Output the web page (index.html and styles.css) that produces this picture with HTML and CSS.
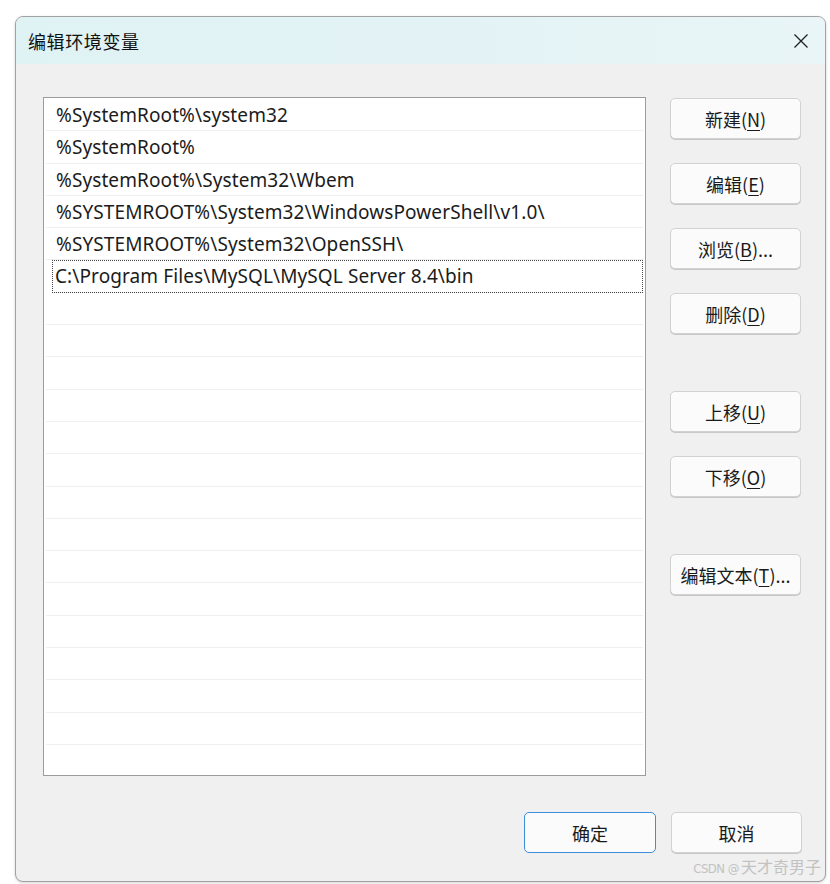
FILE: index.html
```html
<!DOCTYPE html>
<html lang="zh-CN">
<head>
<meta charset="utf-8">
<title>编辑环境变量</title>
<link rel="stylesheet" href="styles.css">
</head>
<body>
<div class="window">
  <div class="titlebar">
    <span class="title">编辑环境变量</span>
    <span class="close">
      <svg width="16" height="16" viewBox="0 0 16 16"><path d="M1.5 1.5 L14.5 14.5 M14.5 1.5 L1.5 14.5" stroke="#1f1f1f" stroke-width="1.3" fill="none"/></svg>
    </span>
  </div>
  <div class="content">
    <div class="main">
      <div class="list">
        <div class="row">%SystemRoot%\system32</div>
        <div class="row">%SystemRoot%</div>
        <div class="row">%SystemRoot%\System32\Wbem</div>
        <div class="row">%SYSTEMROOT%\System32\WindowsPowerShell\v1.0\</div>
        <div class="row">%SYSTEMROOT%\System32\OpenSSH\</div>
        <div class="row focus">C:\Program Files\MySQL\MySQL Server 8.4\bin</div>
        <div class="row"></div>
        <div class="row"></div>
        <div class="row"></div>
        <div class="row"></div>
        <div class="row"></div>
        <div class="row"></div>
        <div class="row"></div>
        <div class="row"></div>
        <div class="row"></div>
        <div class="row"></div>
        <div class="row"></div>
        <div class="row"></div>
        <div class="row"></div>
        <div class="row"></div>
        <div class="row last"></div>
      </div>
      <div class="side">
        <button class="btn">新建(<u>N</u>)</button>
        <button class="btn">编辑(<u>E</u>)</button>
        <button class="btn">浏览(<u>B</u>)...</button>
        <button class="btn">删除(<u>D</u>)</button>
        <button class="btn gap">上移(<u>U</u>)</button>
        <button class="btn">下移(<u>O</u>)</button>
        <button class="btn gap">编辑文本(<u>T</u>)...</button>
      </div>
    </div>
    <div class="footer">
      <button class="btn primary">确定</button>
      <button class="btn">取消</button>
    </div>
  </div>
  <div class="watermark"><span class="wm-latin">CSDN @</span>天才奇男子</div>
</div>
</body>
</html>
```
FILE: styles.css
```css
* { box-sizing: border-box; }
html, body { margin: 0; padding: 0; background: #ffffff; }
body {
  width: 830px;
  height: 884px;
  overflow: hidden;
  font-family: "Noto Sans", "Noto Sans CJK SC", sans-serif;
  color: #1a1a1a;
}
.window {
  position: relative;
  margin: 16px 0 0 15px;
  width: 811px;
  height: 866px;
  border: 1px solid #a2a2a2;
  border-radius: 8px;
  background: #f0f0f0;
  overflow: hidden;
  box-shadow: 0 1px 3px rgba(0,0,0,0.18);
}
.titlebar {
  height: 47px;
  display: flex;
  align-items: center;
  justify-content: space-between;
  padding: 0 16px 0 12px;
  background: linear-gradient(90deg, #dff2f4 0%, #e3f3f5 55%, #e9f5f6 100%);
}
.title {
  font-family: "Noto Sans CJK SC", sans-serif;
  font-size: 18px;
  color: #111;
  letter-spacing: 0.6px;
}
.close { display: flex; width: 16px; height: 16px; }
.content { padding: 33px 23px 0 27px; }
.main { display: flex; gap: 24px; }
.list {
  width: 603px;
  height: 679px;
  border: 1px solid #9c9c9c;
  background: #ffffff;
  padding: 1px 2px 0 2px;
  display: flex;
  flex-direction: column;
}
.row {
  height: 32.3px;
  flex: none;
  border-bottom: 1.5px solid #efefef;
  font-size: 19px;
  letter-spacing: 0.1px;
  line-height: 33px;
  padding-left: 10px;
  white-space: nowrap;
  color: #1b1b1b;
}
.row.last { border-bottom: none; }
.row.focus {
  margin-left: 6px;
  padding-left: 3px;
  outline: 1px dotted #444;
  outline-offset: -1px;
}
.side {
  display: flex;
  flex-direction: column;
  gap: 24px;
  padding-top: 1px;
}
.btn {
  width: 131px;
  height: 41px;
  border: 1px solid #d2d2d2;
  border-radius: 5px;
  background: #fbfbfb;
  font-family: "Noto Sans CJK SC", sans-serif;
  font-size: 18px;
  color: #1a1a1a;
  padding: 0;
  display: flex;
  align-items: center;
  justify-content: center;
  box-shadow: 0 1px 0 #c8c8c8;
}
.btn u { text-underline-offset: 3px; text-decoration-thickness: 1px; }
.btn.gap { margin-top: 33px; }
.footer {
  display: flex;
  justify-content: flex-end;
  gap: 15px;
  margin-top: 36px;
}
.btn.primary {
  width: 132px;
  border: 1.5px solid #3b8fdc;
  box-shadow: none;
}
.watermark {
  position: absolute;
  right: 4px;
  bottom: 3px;
  font-family: "Noto Sans CJK SC", sans-serif;
  font-size: 16px;
  color: #c2c2c2;
  white-space: nowrap;
}
.wm-latin {
  font-family: "DejaVu Sans Condensed", "Liberation Sans Narrow", "Liberation Sans", sans-serif;
  font-size: 13px;
  letter-spacing: -0.5px;
  margin-right: 2px;
}
```
